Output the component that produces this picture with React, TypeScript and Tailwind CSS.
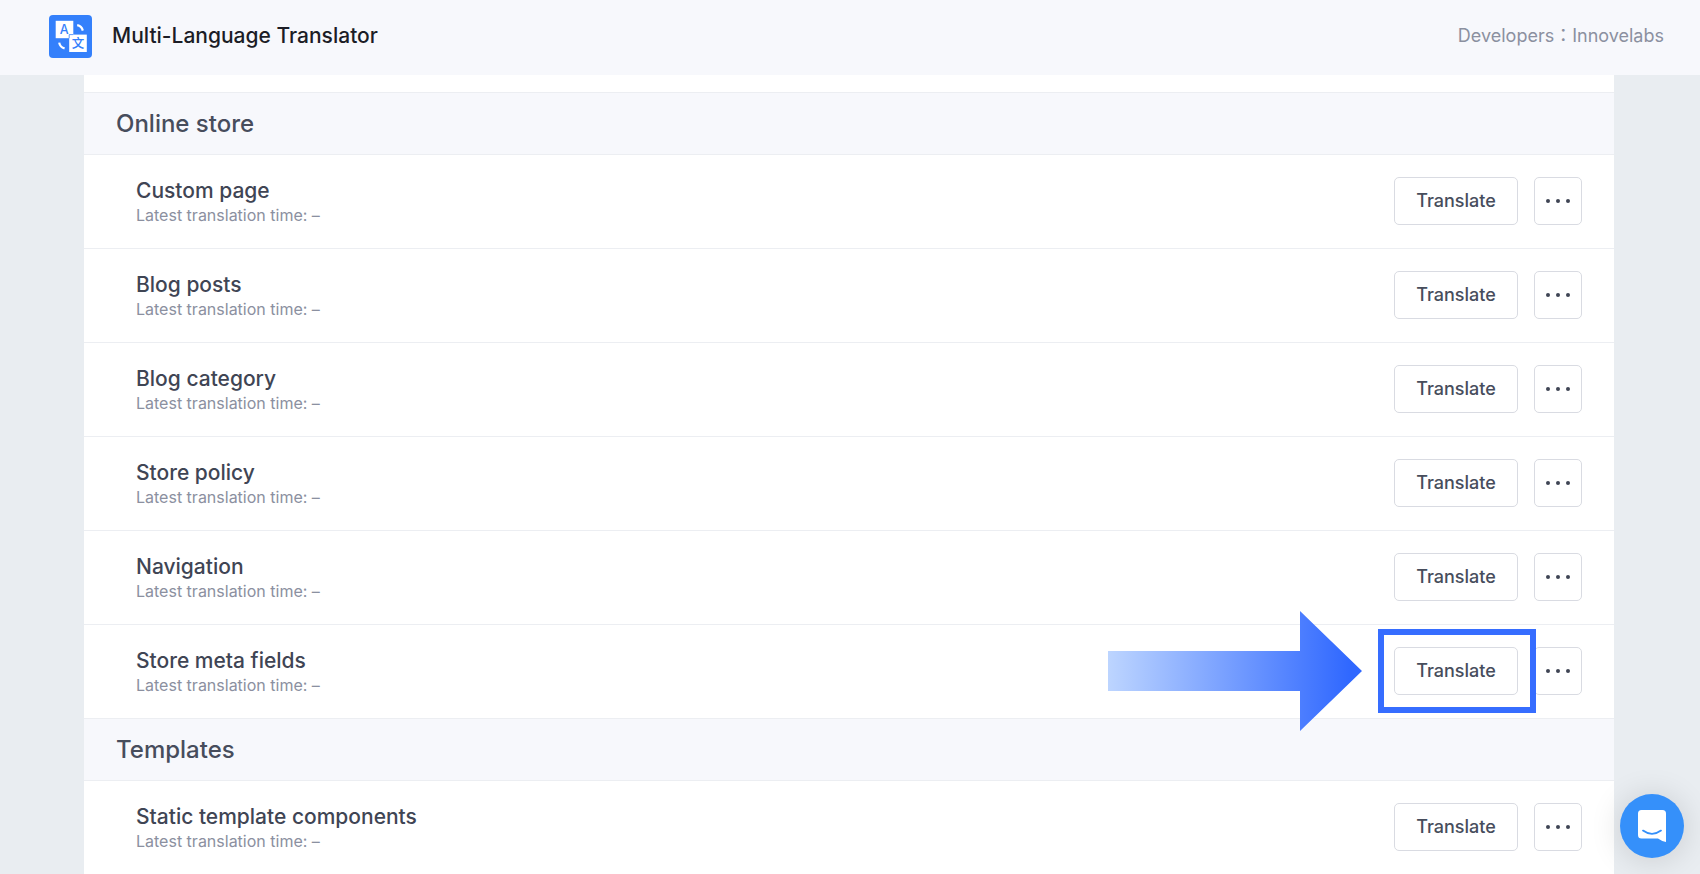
type Item = { name: string; highlighted?: boolean };
type Section = { title: string; items: Item[] };

const sections: Section[] = [
  {
    title: "Online store",
    items: [
      { name: "Custom page" },
      { name: "Blog posts" },
      { name: "Blog category" },
      { name: "Store policy" },
      { name: "Navigation" },
      { name: "Store meta fields", highlighted: true },
    ],
  },
  { title: "Templates", items: [{ name: "Static template components" }] },
];

function Logo() {
  return (
    <svg viewBox="0 0 43 43" className="size-[43px] shrink-0" aria-hidden="true">
      <rect width="43" height="43" rx="4" fill="#3480fb" />
      <rect x="6.7" y="5.8" width="17.6" height="17.4" fill="#fff" />
      <rect x="20.2" y="19.6" width="17.6" height="17.4" fill="#fff" />
      <path d="M20.2 23.2V19.6H24.3" fill="none" stroke="#3480fb" strokeWidth="0.8" />
      <text x="15.2" y="18.8" textAnchor="middle" fontSize="12.5" fontWeight="500" fill="#3480fb" className="font-['Inter',sans-serif]">A</text>
      <text x="29" y="33" textAnchor="middle" fontSize="12.5" fontWeight="500" fill="#3480fb" className="font-['Noto_Sans_CJK_SC',sans-serif]">文</text>
      <path d="M28.2 10.2Q32.6 11 33.8 15.6" fill="none" stroke="#fff" strokeWidth="2.2" />
      <path d="M10.2 27.6Q11 32.2 15.6 33.4" fill="none" stroke="#fff" strokeWidth="2.2" />
    </svg>
  );
}

function Arrow() {
  return (
    <svg viewBox="0 0 254 122" className="pointer-events-none absolute right-[156px] top-1/2 z-10 h-[122px] w-[254px] -translate-y-1/2" aria-hidden="true">
      <defs>
        <linearGradient id="arrow-fill" x1="0" y1="0" x2="1" y2="0">
          <stop offset="0" stopColor="#bdd5ff" />
          <stop offset="0.95" stopColor="#3068ff" />
        </linearGradient>
      </defs>
      <path d="M0 41H192V1L254 61L192 121V81H0Z" fill="url(#arrow-fill)" />
    </svg>
  );
}

function Row({ name, highlighted }: Item) {
  return (
    <li className="flex h-[94px] items-center justify-between border-b border-[#eceef2] pl-[52px] pr-8">
      <div>
        <h3 className="text-[21px] font-medium leading-[26px] text-[#3f4554]">{name}</h3>
        <p className="text-base leading-[22px] text-[#8b90a0]">Latest translation time: –</p>
      </div>
      <div className="flex gap-4 pb-px">
        <div className="relative">
          <button type="button" className="h-12 w-[124px] rounded-[5px] border border-[#d9dbe2] bg-white text-lg font-medium text-[#474d5c]">
            Translate
          </button>
          {highlighted && (
            <>
              <Arrow />
              <div className="pointer-events-none absolute -inset-x-4 -inset-y-[18px] z-10 -mr-0.5 border-[6px] border-[#366dff]" />
            </>
          )}
        </div>
        <button type="button" aria-label={`More actions for ${name}`} className="flex size-12 items-center justify-center rounded-[5px] border border-[#d9dbe2] bg-white">
          <svg viewBox="0 0 26 6" className="h-1.5 w-[26px] fill-[#3f4554]" aria-hidden="true">
            <circle cx="3" cy="3" r="2" />
            <circle cx="13" cy="3" r="2" />
            <circle cx="23" cy="3" r="2" />
          </svg>
        </button>
      </div>
    </li>
  );
}

export default function App() {
  return (
    <div className="flex h-screen flex-col bg-[#e9edf1] font-['Inter','Noto_Sans_CJK_JP',sans-serif]">
      <header className="flex h-[75px] shrink-0 items-center justify-between bg-[#f7f8fc] pb-[3px] pl-[49px] pr-9">
        <div className="flex items-center gap-5">
          <Logo />
          <h1 className="text-[21px] font-medium text-[#1c1d26]">Multi-Language Translator</h1>
        </div>
        <p className="text-lg text-[#8b90a0]" lang="ja">Developers：Innovelabs</p>
      </header>
      <main className="min-h-0 flex-1 overflow-hidden pl-[84px] pr-[86px]">
        <div className="bg-white pt-[17px]">
          {sections.map((section) => (
            <section key={section.title} className="not-first:-mt-px">
              <h2 className="flex h-[63px] items-center border-b border-t border-[#eceef2] bg-[#f7f8fc] px-8 text-2xl font-medium text-[#474d5c]">
                {section.title}
              </h2>
              <ul>
                {section.items.map((item) => (
                  <Row key={item.name} {...item} />
                ))}
              </ul>
            </section>
          ))}
        </div>
      </main>
      <button type="button" aria-label="Open chat" className="fixed bottom-4 right-4 flex size-16 items-center justify-center rounded-full bg-[#3590fa] shadow-[0_2px_32px_rgba(0,0,0,0.14)]">
        <svg viewBox="0 0 28 32" className="h-8 w-7" aria-hidden="true">
          <path d="M3.5 0H24.5A3.5 3.5 0 0 1 28 3.5V32Q23 31 20 28.6H3.5A3.5 3.5 0 0 1 0 25.1V3.5A3.5 3.5 0 0 1 3.5 0Z" fill="#fff" />
          <path d="M5 20.6Q14 27.2 23 20.6" fill="none" stroke="#3590fa" strokeWidth="1.8" strokeLinecap="round" />
        </svg>
      </button>
    </div>
  );
}
